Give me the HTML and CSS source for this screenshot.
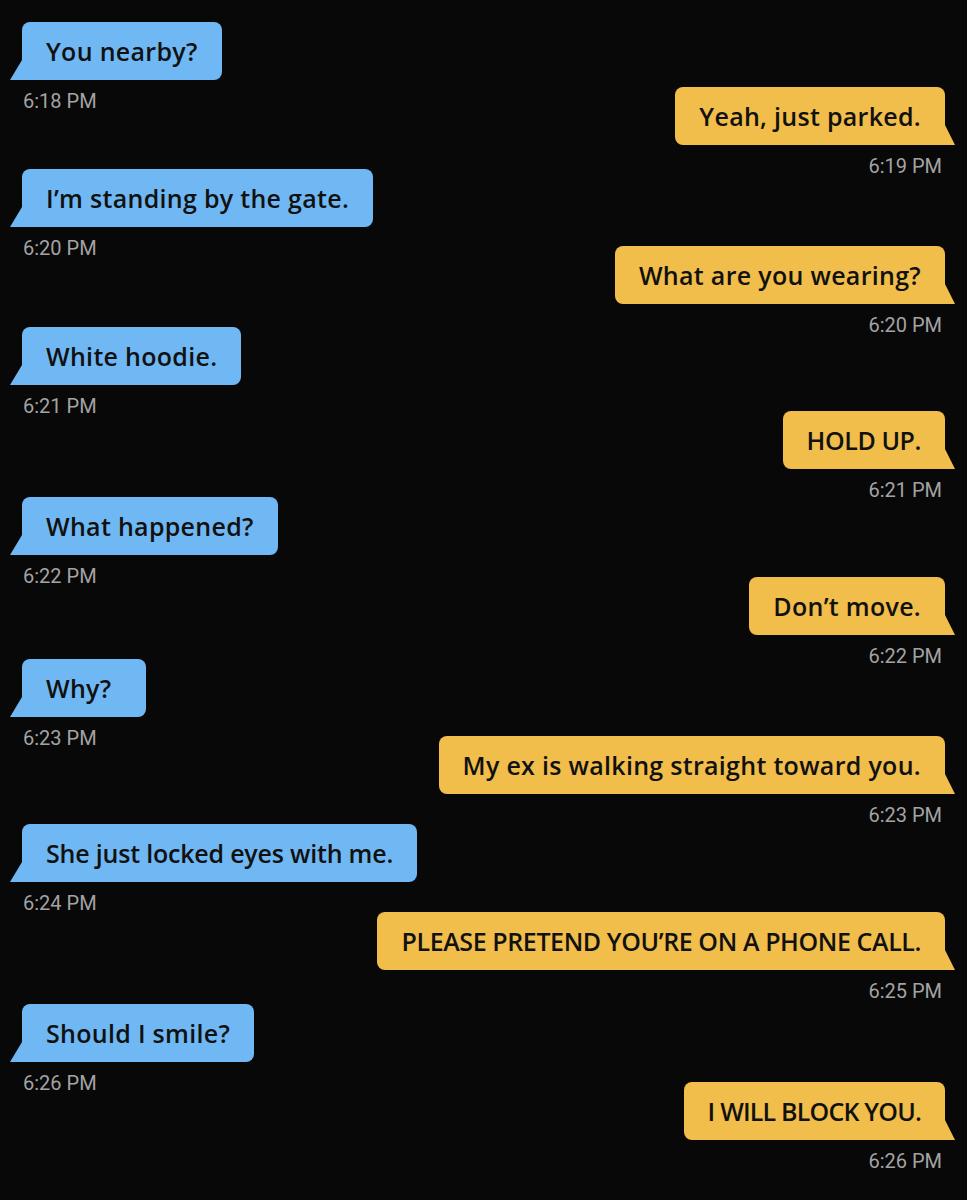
FILE: index.html
```html
<!DOCTYPE html>
<html lang="en">
<head>
<meta charset="utf-8">
<title>Chat</title>
<link rel="stylesheet" href="styles.css">
</head>
<body>
<main class="chat">
  <div class="msg in"><div class="bubble">You nearby?</div><div class="time">6:18 PM</div></div>
  <div class="msg out"><div class="bubble">Yeah, just parked.</div><div class="time">6:19 PM</div></div>
  <div class="msg in"><div class="bubble">I’m standing by the gate.</div><div class="time">6:20 PM</div></div>
  <div class="msg out"><div class="bubble">What are you wearing?</div><div class="time">6:20 PM</div></div>
  <div class="msg in"><div class="bubble">White hoodie.</div><div class="time">6:21 PM</div></div>
  <div class="msg out"><div class="bubble caps">HOLD UP.</div><div class="time">6:21 PM</div></div>
  <div class="msg in"><div class="bubble">What happened?</div><div class="time">6:22 PM</div></div>
  <div class="msg out"><div class="bubble">Don’t move.</div><div class="time">6:22 PM</div></div>
  <div class="msg in"><div class="bubble">Why?</div><div class="time">6:23 PM</div></div>
  <div class="msg out"><div class="bubble">My ex is walking straight toward you.</div><div class="time">6:23 PM</div></div>
  <div class="msg in"><div class="bubble tight">She just locked eyes with me.</div><div class="time">6:24 PM</div></div>
  <div class="msg out"><div class="bubble caps">PLEASE PRETEND YOU’RE ON A PHONE CALL.</div><div class="time">6:25 PM</div></div>
  <div class="msg in"><div class="bubble">Should I smile?</div><div class="time">6:26 PM</div></div>
  <div class="msg out"><div class="bubble caps tight">I WILL BLOCK YOU.</div><div class="time">6:26 PM</div></div>
</main>
</body>
</html>
```

FILE: styles.css
```css
html, body {
  margin: 0;
  padding: 0;
  background: #080808;
}

.chat {
  display: flex;
  flex-direction: column;
  padding: 22px 22px 0 22px;
  height: 1200px;
  box-sizing: border-box;
}

.msg {
  display: flex;
  flex-direction: column;
}

.msg.in { align-items: flex-start; }
.msg.out { align-items: flex-end; }

.bubble {
  position: relative;
  box-sizing: border-box;
  min-width: 124px;
  font-family: "Open Sans", "Liberation Sans", sans-serif;
  font-weight: 600;
  font-size: 25px;
  letter-spacing: 0.3px;
  line-height: 34px;
  color: #111111;
  padding: 12px 24px;
  border-radius: 8px;
}

.bubble.caps {
  letter-spacing: -0.4px;
}

.bubble.tight {
  letter-spacing: -0.2px;
}

.bubble.caps.tight {
  letter-spacing: -0.8px;
}

.msg.in .bubble {
  background: #70b8f3;
  border-bottom-left-radius: 0;
}

.msg.out .bubble {
  background: #f1bd4b;
  border-bottom-right-radius: 0;
}

.bubble::before {
  content: "";
  position: absolute;
  bottom: 0;
  width: 30px;
  height: 20px;
}

.msg.in .bubble::before {
  left: -12px;
  background: #70b8f3;
  clip-path: polygon(12px 0, 100% 0, 100% 100%, 0 100%);
}

.msg.out .bubble::before {
  right: -10px;
  background: #f1bd4b;
  clip-path: polygon(0 0, 20px 0, 100% 100%, 0 100%);
}

.time {
  font-family: Roboto, "Liberation Sans", sans-serif;
  font-size: 20px;
  line-height: 16px;
  margin-top: 13px;
  color: #a3a3a3;
}

.msg.in .time { padding-left: 1px; }
.msg.out .time { padding-right: 3px; }

.msg:nth-child(2)  { margin-top: -22px; }
.msg:nth-child(3)  { margin-top: -5px; }
.msg:nth-child(4)  { margin-top: -10px; }
.msg:nth-child(5)  { margin-top: -6px; }
.msg:nth-child(6)  { margin-top: -3px; }
.msg:nth-child(7)  { margin-top: -1px; }
.msg:nth-child(8)  { margin-top: -7px; }
.msg:nth-child(9)  { margin-top: -5px; }
.msg:nth-child(10) { margin-top: -10px; }
.msg:nth-child(11) { margin-top: 1px; }
.msg:nth-child(12) { margin-top: 1px; }
.msg:nth-child(13) { margin-top: 5px; }
.msg:nth-child(14) { margin-top: -9px; }
```
